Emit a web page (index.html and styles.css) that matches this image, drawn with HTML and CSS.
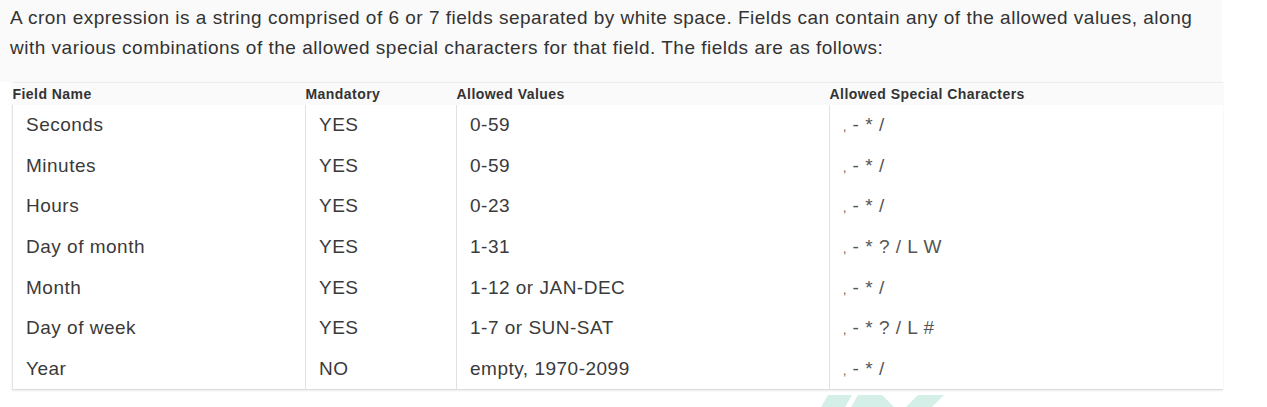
FILE: index.html
```html
<!DOCTYPE html>
<html lang="en">
<head>
<meta charset="utf-8">
<title>Cron expression fields</title>
<link rel="stylesheet" href="styles.css">
</head>
<body>
<div class="page">
  <div class="intro">
    <p>A cron expression is a string comprised of 6 or 7 fields separated by white space. Fields can contain any of the allowed values, along with various combinations of the allowed special characters for that field. The fields are as follows:</p>
  </div>
  <table class="fields">
    <colgroup>
      <col class="c1"><col class="c2"><col class="c3"><col class="c4">
    </colgroup>
    <thead>
      <tr><th>Field Name</th><th>Mandatory</th><th>Allowed Values</th><th>Allowed Special Characters</th></tr>
    </thead>
    <tbody>
      <tr><td>Seconds</td><td>YES</td><td>0-59</td><td class="sp"><span class="cm">,</span> - * /</td></tr>
      <tr><td>Minutes</td><td>YES</td><td>0-59</td><td class="sp"><span class="cm">,</span> - * /</td></tr>
      <tr><td>Hours</td><td>YES</td><td>0-23</td><td class="sp"><span class="cm">,</span> - * /</td></tr>
      <tr><td>Day of month</td><td>YES</td><td>1-31</td><td class="sp"><span class="cm">,</span> - * ? / L W</td></tr>
      <tr><td>Month</td><td>YES</td><td>1-12 or JAN-DEC</td><td class="sp"><span class="cm">,</span> - * /</td></tr>
      <tr><td>Day of week</td><td>YES</td><td>1-7 or SUN-SAT</td><td class="sp"><span class="cm">,</span> - * ? / L #</td></tr>
      <tr><td>Year</td><td>NO</td><td>empty, 1970-2099</td><td class="sp"><span class="cm">,</span> - * /</td></tr>
    </tbody>
  </table>
  <svg class="watermark" width="130" height="14" viewBox="0 0 130 14" aria-hidden="true">
    <polygon points="8,0 32,0 24,14 0,14" fill="#d3efe8"/>
    <polygon points="38,0 62,0 76,14 30,14" fill="#d3efe8"/>
    <polygon points="98,0 124,0 110,14 84,14" fill="#d3efe8"/>
  </svg>
</div>
</body>
</html>
```

FILE: styles.css
```css
html, body {
  margin: 0;
  padding: 0;
  background: #ffffff;
}

.page {
  position: relative;
  width: 1267px;
  height: 407px;
  overflow: hidden;
  font-family: "Liberation Sans", Arial, sans-serif;
  color: #333333;
}

.intro {
  width: 1212px;
  height: 79px;
  padding: 3px 0 0 10px;
  background: #fafafa;
}

.intro p {
  margin: 0;
  font-size: 19px;
  letter-spacing: 0.5px;
  line-height: 30px;
  color: #333333;
}

.fields {
  margin-left: 12px;
  width: 1210px;
  border-collapse: collapse;
  table-layout: fixed;
  border-top: 1px solid #ececec;
  border-bottom: 1px solid #dcdcdc;
  box-shadow: 0 1px 2px rgba(0, 0, 0, 0.08);
}

.c1 { width: 293px; }
.c2 { width: 151px; }
.c3 { width: 373px; }
.c4 { width: 393px; }

.fields th {
  text-align: left;
  font-size: 14px;
  letter-spacing: 0.45px;
  font-weight: bold;
  color: #333333;
  height: 22px;
  padding: 0;
  vertical-align: middle;
  background: #fafafa;
}

.fields td {
  height: 40.6px;
  padding: 0 0 0 13px;
  font-size: 19px;
  letter-spacing: 0.5px;
  color: #3a3a3a;
  vertical-align: middle;
  border-left: 1px solid #e2e2e2;
  background: #ffffff;
}

.fields td.sp {
  color: #555555;
  letter-spacing: 0.5px;
}

.fields td.sp .cm {
  font-size: 12px;
}

.watermark {
  position: absolute;
  left: 820px;
  top: 395px;
}
```
